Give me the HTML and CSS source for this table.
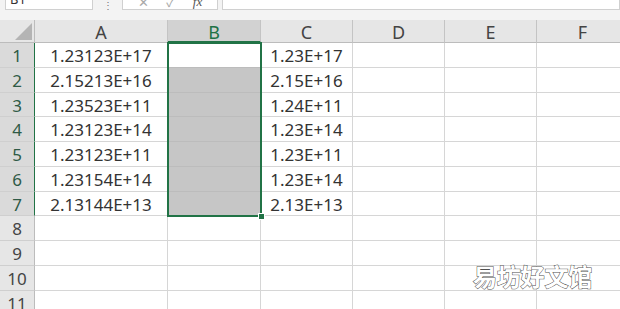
FILE: index.html
```html
<!DOCTYPE html>
<html lang="zh">
<head>
<meta charset="utf-8">
<link rel="stylesheet" href="styles.css">
</head>
<body>
<div class="app">
  <div class="formula-bar">
    <div class="namebox">B1</div>
    <div class="colon">⋮</div>
    <div class="fxbox"><span class="ic">✕</span><span class="ic">✓</span><span class="ic fx">fx</span></div>
    <div class="input"></div>
  </div>
  <div class="sheet">
    <div class="corner"><span class="tri"></span></div>
    <div class="ch">A</div>
    <div class="ch sel">B</div>
    <div class="ch">C</div>
    <div class="ch">D</div>
    <div class="ch">E</div>
    <div class="ch last">F</div>

    <div class="rh sel">1</div><div class="c">1.23123E+17</div><div class="c b first"></div><div class="c">1.23E+17</div><div class="c"></div><div class="c"></div><div class="c"></div>
    <div class="rh sel">2</div><div class="c">2.15213E+16</div><div class="c b"></div><div class="c">2.15E+16</div><div class="c"></div><div class="c"></div><div class="c"></div>
    <div class="rh sel">3</div><div class="c">1.23523E+11</div><div class="c b"></div><div class="c">1.24E+11</div><div class="c"></div><div class="c"></div><div class="c"></div>
    <div class="rh sel">4</div><div class="c">1.23123E+14</div><div class="c b"></div><div class="c">1.23E+14</div><div class="c"></div><div class="c"></div><div class="c"></div>
    <div class="rh sel">5</div><div class="c">1.23123E+11</div><div class="c b"></div><div class="c">1.23E+11</div><div class="c"></div><div class="c"></div><div class="c"></div>
    <div class="rh sel">6</div><div class="c">1.23154E+14</div><div class="c b"></div><div class="c">1.23E+14</div><div class="c"></div><div class="c"></div><div class="c"></div>
    <div class="rh sel">7</div><div class="c">2.13144E+13</div><div class="c b"></div><div class="c">2.13E+13</div><div class="c"></div><div class="c"></div><div class="c"></div>
    <div class="rh">8</div><div class="c"></div><div class="c"></div><div class="c"></div><div class="c"></div><div class="c"></div><div class="c"></div>
    <div class="rh">9</div><div class="c"></div><div class="c"></div><div class="c"></div><div class="c"></div><div class="c"></div><div class="c"></div>
    <div class="rh">10</div><div class="c"></div><div class="c"></div><div class="c"></div><div class="c"></div><div class="c"></div><div class="c"></div>
    <div class="rh">11</div><div class="c"></div><div class="c"></div><div class="c"></div><div class="c"></div><div class="c"></div><div class="c"></div>

    <div class="selection"><span class="handle"></span></div>
  </div>
  <div class="watermark">易坊好文馆</div>
</div>
</body>
</html>
```
FILE: styles.css
```css
html, body {
  margin: 0;
  padding: 0;
  background: #ffffff;
  overflow: hidden;
}
.app {
  position: relative;
  width: 620px;
  height: 309px;
  overflow: hidden;
  font-family: "Noto Sans", "Noto Sans CJK SC", sans-serif;
}
.formula-bar {
  height: 20px;
  background: #f3f3f3;
  display: flex;
  align-items: flex-start;
  padding-left: 5px;
  box-sizing: border-box;
}
.namebox, .fxbox, .input {
  height: 24px;
  margin-top: -14px;
  background: #ffffff;
  border: 1px solid #d0d0d0;
  box-sizing: border-box;
}
.namebox {
  width: 88px;
  font-size: 13px;
  line-height: 20px;
  padding-left: 4px;
  color: #333;
  display: flex;
  align-items: flex-end;
}
.colon {
  width: 29px;
  text-align: center;
  font-size: 10px;
  color: #777;
  line-height: 10px;
}
.fxbox {
  width: 96px;
  display: flex;
  justify-content: space-around;
  align-items: flex-end;
  padding: 0 6px;
  color: #aaa;
  font-size: 13px;
  line-height: 14px;
}
.fx {
  font-style: italic;
  font-family: "Liberation Serif", serif;
  color: #555;
}
.input {
  margin-left: 4px;
  flex: 1;
}
.sheet {
  position: relative;
  display: grid;
  grid-template-columns: 35px 133px 93px 92px 92px 92px 92px;
  grid-template-rows: 23px repeat(11, 24.75px);
  font-size: 17px;
  color: #333333;
}
.corner {
  background: #e6e6e6;
  border-right: 1px solid #bcbcbc;
  border-bottom: 1px solid #bcbcbc;
  box-sizing: border-box;
  position: relative;
}
.tri {
  position: absolute;
  right: 2px;
  bottom: 2px;
  width: 0;
  height: 0;
  border-left: 17px solid transparent;
  border-bottom: 17px solid #b4b4b4;
}
.ch {
  background: #e6e6e6;
  border-right: 1px solid #c4c4c4;
  border-bottom: 1px solid #bcbcbc;
  box-sizing: border-box;
  text-align: center;
  line-height: 24px;
  color: #444;
  font-size: 18px;
}
.ch.sel {
  background: #d2d2d2;
  color: #217346;
  border-bottom: 2px solid #217346;
}
.rh {
  background: #e6e6e6;
  border-right: 1px solid #bcbcbc;
  border-bottom: 1px solid #cfcfcf;
  box-sizing: border-box;
  text-align: center;
  line-height: 25px;
  color: #444;
}
.rh.sel {
  background: #dadada;
  color: #2f5a46;
  border-right: 1px solid #217346;
}
.c {
  border-right: 1px solid #d6d6d6;
  border-bottom: 1px solid #d6d6d6;
  box-sizing: border-box;
  text-align: center;
  line-height: 25px;
  white-space: nowrap;
  overflow: hidden;
}
.c.b {
  background: #c6c6c6;
  border-bottom-color: #bcbcbc;
  border-right-color: #c6c6c6;
}
.c.b.first {
  background: #ffffff;
}
.selection {
  position: absolute;
  left: 167px;
  top: 22px;
  width: 95px;
  height: 175px;
  box-sizing: border-box;
  border: 2px solid #217346;
  pointer-events: none;
}
.handle {
  position: absolute;
  right: -5px;
  bottom: -5px;
  width: 5px;
  height: 5px;
  background: #217346;
  border: 1px solid #ffffff;
}
.watermark {
  position: absolute;
  left: 473px;
  top: 258px;
  font-family: "Noto Sans CJK SC", sans-serif;
  font-weight: 700;
  font-size: 24px;
  letter-spacing: -0.2px;
  color: #ffffff;
  -webkit-text-stroke: 1px #505050;
  paint-order: stroke fill;
}
```
